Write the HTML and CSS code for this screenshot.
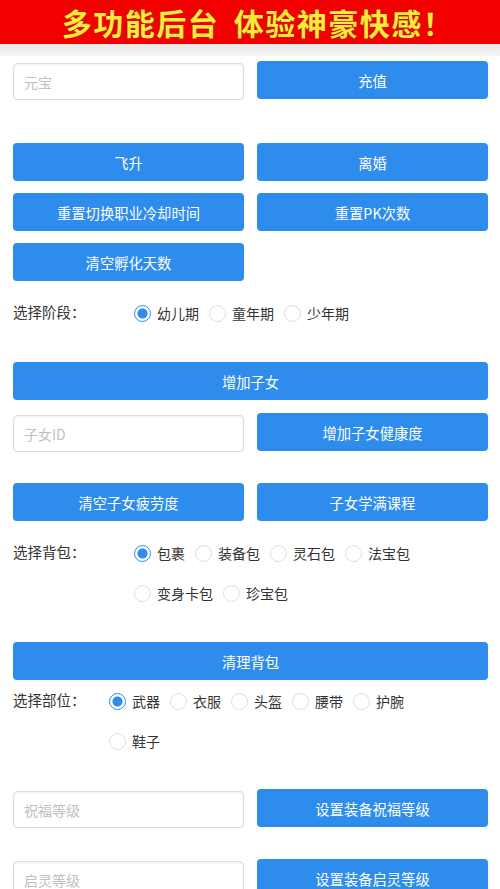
FILE: index.html
```html
<!DOCTYPE html>
<html lang="zh-CN">
<head>
    <meta charset="UTF-8">
    <meta name="viewport" content="width=device-width, initial-scale=1.0">
    <title>后台</title>
    <link rel="stylesheet" href="styles.css">
</head>
<body>

<div class="banner">多功能后台 体验神豪快感！</div>
<div class="band"></div>

<div class="main">
    <div class="pair first">
        <input type="text" class="field" placeholder="元宝">
        <button class="btn">充值</button>
    </div>

    <div class="grid actions">
        <button class="btn">飞升</button>
        <button class="btn">离婚</button>
        <button class="btn">重置切换职业冷却时间</button>
        <button class="btn">重置PK次数</button>
        <button class="btn">清空孵化天数</button>
    </div>

    <div class="choice stage">
        <span class="choice-label">选择阶段：</span>
        <div class="options">
            <label class="opt"><input type="radio" name="stage" checked>幼儿期</label>
            <label class="opt"><input type="radio" name="stage">童年期</label>
            <label class="opt"><input type="radio" name="stage">少年期</label>
        </div>
    </div>

    <button class="btn wide add-child">增加子女</button>

    <div class="pair child-id">
        <input type="text" class="field" placeholder="子女ID">
        <button class="btn">增加子女健康度</button>
    </div>

    <div class="grid child-actions">
        <button class="btn">清空子女疲劳度</button>
        <button class="btn">子女学满课程</button>
    </div>

    <div class="choice bag">
        <span class="choice-label">选择背包：</span>
        <div class="options">
            <label class="opt"><input type="radio" name="bag" checked>包裹</label>
            <label class="opt"><input type="radio" name="bag">装备包</label>
            <label class="opt"><input type="radio" name="bag">灵石包</label>
            <label class="opt"><input type="radio" name="bag">法宝包</label>
            <label class="opt"><input type="radio" name="bag">变身卡包</label>
            <label class="opt"><input type="radio" name="bag">珍宝包</label>
        </div>
    </div>

    <button class="btn wide clear-bag">清理背包</button>

    <div class="choice part">
        <span class="choice-label">选择部位：</span>
        <div class="options">
            <label class="opt"><input type="radio" name="part" checked>武器</label>
            <label class="opt"><input type="radio" name="part">衣服</label>
            <label class="opt"><input type="radio" name="part">头盔</label>
            <label class="opt"><input type="radio" name="part">腰带</label>
            <label class="opt"><input type="radio" name="part">护腕</label>
            <label class="opt"><input type="radio" name="part">鞋子</label>
        </div>
    </div>

    <div class="pair bless">
        <input type="text" class="field" placeholder="祝福等级">
        <button class="btn">设置装备祝福等级</button>
    </div>

    <div class="pair spirit">
        <input type="text" class="field" placeholder="启灵等级">
        <button class="btn">设置装备启灵等级</button>
    </div>
</div>

</body>
</html>
```

FILE: styles.css
```css
body {
    margin: 0;
    padding: 0;
    background-color: #fff;
    font-family: "Noto Sans CJK SC", "Noto Sans", sans-serif;
    color: #333;
}
.banner {
    height: 44px;
    line-height: 44px;
    padding-left: 16px;
    background-color: #f20000;
    color: #ffe83a;
    font-size: 30px;
    font-weight: bold;
    text-align: center;
    letter-spacing: 1.5px;
    word-spacing: 6px;
    text-shadow: 0 0 1px #8a2000, 0 0 1px #8a2000;
}
.band {
    height: 12px;
    background: linear-gradient(#e9e9e9, #f5f5f5);
}
.main {
    padding: 0 12px 40px 13px;
}
.pair, .grid {
    display: grid;
    grid-template-columns: 1fr 1fr;
    column-gap: 13px;
    align-items: start;
}
.grid {
    row-gap: 12px;
}
.btn {
    height: 38px;
    padding: 0;
    border: none;
    border-radius: 4px;
    background-color: #2d8cec;
    color: #fff;
    font-family: inherit;
    font-size: 14.3px;
    cursor: pointer;
}
.btn.wide {
    display: block;
    width: 100%;
}
.field {
    box-sizing: border-box;
    height: 37px;
    margin-top: 2px;
    padding: 0 10px;
    border: 1px solid #dcdcdc;
    border-radius: 4px;
    box-shadow: inset 0 1px 2px rgba(0, 0, 0, 0.08);
    font-family: inherit;
    font-size: 14px;
    color: #333;
    outline: none;
}
.field::placeholder {
    color: #c0c0c0;
}

/* radio groups */
.choice {
    display: flex;
    align-items: flex-start;
}
.choice-label {
    flex: none;
    width: 121px;
    height: 40px;
    line-height: 38px;
    font-size: 14.5px;
}
.part .choice-label {
    width: 96px;
}
.options {
    display: flex;
    flex-wrap: wrap;
    width: 330px;
}
.opt {
    display: flex;
    align-items: center;
    height: 40px;
    margin-right: 10px;
    font-size: 14px;
    cursor: pointer;
}
.opt input {
    appearance: none;
    -webkit-appearance: none;
    box-sizing: border-box;
    width: 17px;
    height: 17px;
    margin: 0 6px 0 0;
    border: 1px solid #ddd;
    border-radius: 50%;
    background-color: #fff;
}
.opt input:checked {
    border: 1.5px solid #2d8cec;
    background: radial-gradient(circle, #2d8cec 0, #2d8cec 4.5px, #fff 5.5px);
}

/* vertical rhythm */
.first { margin-top: 5px; }
.actions { margin-top: 43px; }
.stage { margin-top: 12px; }
.add-child { margin-top: 29px; }
.child-id { margin-top: 13px; }
.child-actions { margin-top: 31px; }
.bag { margin-top: 12px; }
.clear-bag { margin-top: 29px; }
.part { margin-top: 1px; }
.bless { margin-top: 28px; }
.spirit { margin-top: 31px; }
```
